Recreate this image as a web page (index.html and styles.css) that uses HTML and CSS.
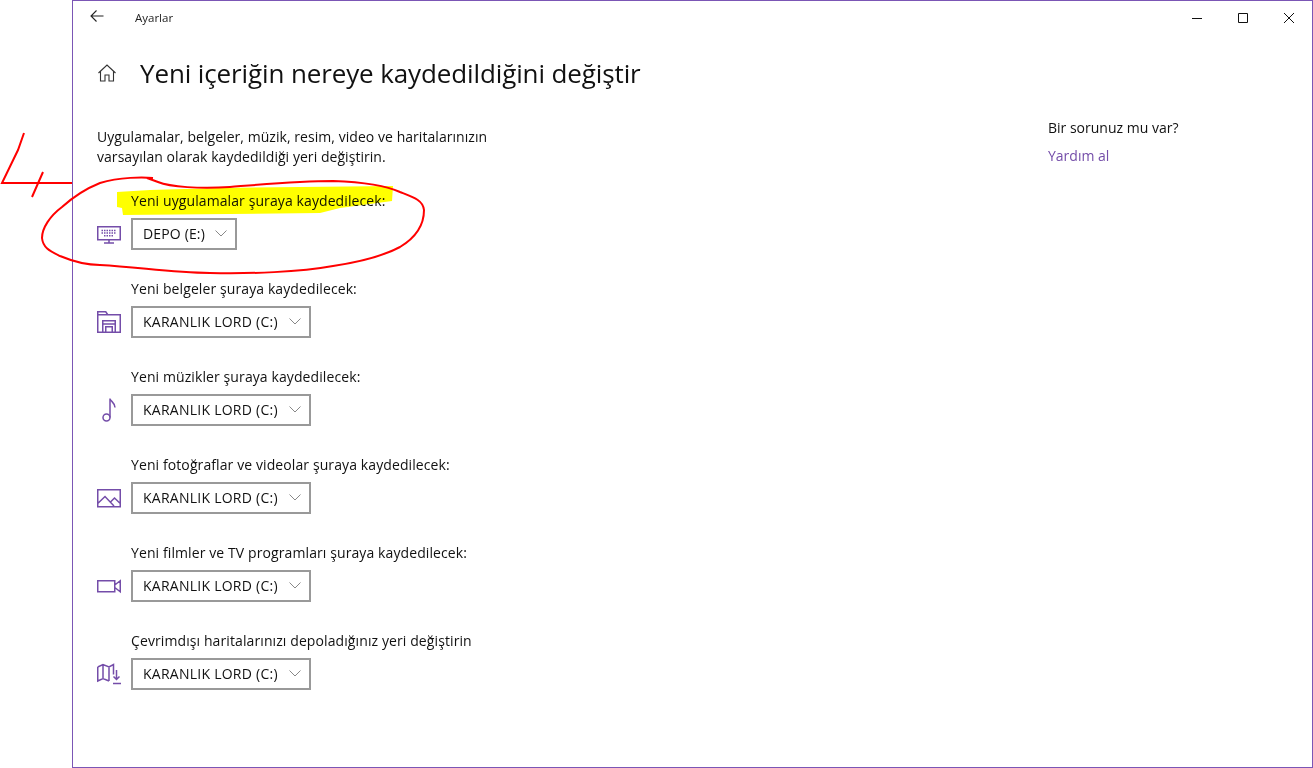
FILE: index.html
```html
<!DOCTYPE html>
<html lang="tr">
<head>
<meta charset="utf-8">
<title>Ayarlar</title>
<link rel="stylesheet" href="styles.css">
</head>
<body>
<div class="window">
  <header class="titlebar">
    <svg class="back" width="16" height="16" viewBox="0 0 16 16"><path d="M14.500 8H2M7.500 2.500 2 8l5.500 5.500"/></svg>
    <span class="app-name">Ayarlar</span>
    <div class="controls">
      <svg width="46" height="32" viewBox="0 0 46 32"><path d="M18 17.500h10"/></svg>
      <svg width="46" height="32" viewBox="0 0 46 32"><path d="M18.500 12.500h9v9h-9z"/></svg>
      <svg width="46" height="32" viewBox="0 0 46 32"><path d="M18 12l10 10M28 12 18 22"/></svg>
    </div>
  </header>
  <div class="page-head">
    <svg class="home" width="20" height="20" viewBox="0 0 20 20"><path d="M1.500 10 10 2l8.500 8M3.500 8.500V18h4.500v-6h4v6h4.500V8.500"/></svg>
    <h1>Yeni içeriğin nereye kaydedildiğini değiştir</h1>
  </div>
  <div class="columns">
    <main class="main">
      <p class="intro">Uygulamalar, belgeler, müzik, resim, video ve haritalarınızın varsayılan olarak kaydedildiği yeri değiştirin.</p>
      <section class="setting">
        <label>Yeni uygulamalar şuraya kaydedilecek:</label>
        <div class="row">
          <svg class="icon" viewBox="0 0 24 24"><path d="M.75 4.750h22.500v13H.75zM12 17.750v3M7 21h10"/><path class="dots" d="M4.500 8.500h15M4.500 11h15M7 13.750h10"/></svg>
          <div class="combo small"><span>DEPO (E:)</span><svg class="chev" width="12" height="7" viewBox="0 0 12 7"><path d="M.5.500 6 6 11.500.5"/></svg></div>
        </div>
      </section>
      <section class="setting">
        <label>Yeni belgeler şuraya kaydedilecek:</label>
        <div class="row">
          <svg class="icon" viewBox="0 0 24 24"><path d="M.75 22.250V1.750h8l2 3h12.500v17.500zM.75 4.750h10M5.750 22.250V10.750h12.500v11.500M8.750 22.250V16.750h6.500v5.500M5.750 14h12.500"/></svg>
          <div class="combo"><span>KARANLIK LORD (C:)</span><svg class="chev" width="12" height="7" viewBox="0 0 12 7"><path d="M.5.500 6 6 11.500.5"/></svg></div>
        </div>
      </section>
      <section class="setting">
        <label>Yeni müzikler şuraya kaydedilecek:</label>
        <div class="row">
          <svg class="icon" viewBox="0 0 24 24"><circle cx="9.500" cy="19.500" r="3.500"/><path d="M13 19.500V.500c.5 3 5 4 5 9"/></svg>
          <div class="combo"><span>KARANLIK LORD (C:)</span><svg class="chev" width="12" height="7" viewBox="0 0 12 7"><path d="M.5.500 6 6 11.500.5"/></svg></div>
        </div>
      </section>
      <section class="setting">
        <label>Yeni fotoğraflar ve videolar şuraya kaydedilecek:</label>
        <div class="row">
          <svg class="icon" viewBox="0 0 24 24"><path d="M.75 3.750h22.500v17H.75zM.75 17.500 8 10.500l9 9.500M13.500 16l4-4 5.750 5.500"/></svg>
          <div class="combo"><span>KARANLIK LORD (C:)</span><svg class="chev" width="12" height="7" viewBox="0 0 12 7"><path d="M.5.500 6 6 11.500.5"/></svg></div>
        </div>
      </section>
      <section class="setting">
        <label>Yeni filmler ve TV programları şuraya kaydedilecek:</label>
        <div class="row">
          <svg class="icon" viewBox="0 0 24 24"><path d="M.75 6.750h17v11h-17zM17.750 11l5.500-4.250v11L17.750 13.500"/></svg>
          <div class="combo"><span>KARANLIK LORD (C:)</span><svg class="chev" width="12" height="7" viewBox="0 0 12 7"><path d="M.5.500 6 6 11.500.5"/></svg></div>
        </div>
      </section>
      <section class="setting">
        <label>Çevrimdışı haritalarınızı depoladığınız yeri değiştirin</label>
        <div class="row">
          <svg class="icon" viewBox="0 0 24 24"><path d="M.75 5 6 2.500l6 2.500 4.500-2.500v10M.75 5v14L6 16.500 12 19M6 2.500v14M12 5v14M19.500 8v9M16.500 14.500l3 3 3-3M16 21.500h8"/></svg>
          <div class="combo"><span>KARANLIK LORD (C:)</span><svg class="chev" width="12" height="7" viewBox="0 0 12 7"><path d="M.5.500 6 6 11.500.5"/></svg></div>
        </div>
      </section>
    </main>
    <aside class="help">
      <p class="help-title">Bir sorunuz mu var?</p>
      <a class="help-link">Yardım al</a>
    </aside>
  </div>
</div>
<svg class="highlight" width="1313" height="768" viewBox="0 0 1313 768"><path d="M117 192 150 190 220 188 300 187 393 186 392 201 340 208 320 213 123 215 122 208 117 207z"/></svg>
<svg class="ink" width="1313" height="768" viewBox="0 0 1313 768"><path d="M153 178C143 177 120 177 100 183 85 189 72 198 62 207 50 216 42 228 42 238 43 248 50 251 60 256 72 261 85 265 100 265 140 267 170 273 210 273 250 274 300 272 333 266 360 262 385 255 400 247 415 238 424 225 424 210 423 200 413 197 400 192 385 185 360 182 333 181 300 181 267 184 230 187 200 189 170 187 158 182L147 178"/><path d="M24 133 18 150 2 183H72M43 172 32 197"/></svg>
</body>
</html>
```
FILE: styles.css
```css
* { box-sizing: border-box; }
html, body { margin: 0; height: 768px; overflow: hidden; background: #fff; }
body { font-family: "Open Sans", "Liberation Sans", sans-serif; color: #000; }
.window {
  margin-left: 72px;
  width: 1241px;
  height: 768px;
  border: 1px solid #7b56b5;
  background: #fff;
}
.titlebar { display: flex; align-items: center; height: 31px; padding-left: 16px; }
.back { fill: none; stroke: #222; stroke-width: 1.1; margin-top: -2px; }
.app-name { margin-left: 30px; margin-top: 2px; font-size: 11.5px; color: #222; }
.controls { margin-left: auto; display: flex; }
.controls svg { fill: none; stroke: #111; stroke-width: 1; display: block; }
.page-head { display: flex; align-items: center; height: 82px; padding-left: 24px; }
.home { fill: none; stroke: #333; stroke-width: 1.1; }
h1 { margin: 0 0 0 23px; font-size: 26px; letter-spacing: -.12px; font-weight: 400; color: #111; white-space: nowrap; }
.columns { display: flex; padding-left: 24px; }
.main { width: 951px; padding-top: 13px; }
.intro { margin: 0 0 24px; width: 420px; font-size: 14px; letter-spacing: .05px; line-height: 20px; color: #111; }
.setting { height: 88px; }
.setting label { display: block; margin-left: 34px; height: 20px; font-size: 14px; letter-spacing: .1px; line-height: 20px; color: #111; }
.row { display: flex; align-items: center; margin-top: 7px; }
.icon { width: 24px; height: 24px; flex: none; fill: none; stroke: #744da9; stroke-width: 1.500; }
.icon .dots { stroke-dasharray: 1.500 1; }
.combo {
  display: flex;
  align-items: center;
  justify-content: space-between;
  margin-left: 10px;
  width: 180px;
  height: 32px;
  padding: 0 8px 2px 10px;
  border: 2px solid #999;
  font-size: 14px;
  letter-spacing: .25px;
  color: #111;
}
.combo.small { width: 106px; letter-spacing: .15px; }
.chev { fill: none; stroke: #888; stroke-width: 1; }
.help { padding-top: 4px; font-size: 14px; }
.help-title { margin: 0 0 8px; line-height: 20px; color: #111; }
.help-link { display: block; line-height: 20px; color: #744da9; }
.highlight { position: absolute; left: 0; top: 0; fill: #ffff00; mix-blend-mode: multiply; pointer-events: none; }
.ink { position: absolute; left: 0; top: 0; fill: none; stroke: #f00; stroke-width: 2; pointer-events: none; }
```
